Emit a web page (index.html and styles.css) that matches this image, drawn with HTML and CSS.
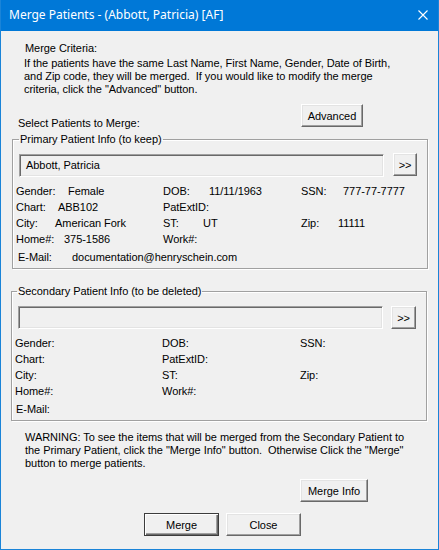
FILE: index.html
```html
<!DOCTYPE html>
<html>
<head>
<meta charset="utf-8">
<title>Merge Patients</title>
<link rel="stylesheet" href="styles.css">
</head>
<body>
<div class="window">
  <div class="titlebar">
    <span class="title">Merge Patients - (Abbott, Patricia) [AF]</span>
    <svg class="close" width="10" height="10" viewBox="0 0 10 10"><path d="M0.5 0.5 L9.5 9.5 M9.5 0.5 L0.5 9.5" stroke="#fff" stroke-width="1.1" fill="none"/></svg>
  </div>
  <div class="content">
    <div class="crit-title">Merge Criteria:</div>
    <p class="crit-text">If the patients have the same Last Name, First Name, Gender, Date of Birth,<br>and Zip code, they will be merged.&nbsp; If you would like to modify the merge<br>criteria, click the "Advanced" button.</p>

    <div class="select-row">
      <span class="select-label">Select Patients to Merge:</span>
      <button class="btn btn-advanced">Advanced</button>
    </div>

    <fieldset class="group group-primary">
      <legend>Primary Patient Info (to keep)</legend>
      <div class="pick-row">
        <div class="field field-primary">Abbott, Patricia</div>
        <button class="btn btn-pick btn-pick-primary">&gt;&gt;</button>
      </div>
      <div class="info-grid">
        <div class="cell"><span class="lbl w-gender">Gender:</span><span class="val">Female</span></div>
        <div class="cell"><span class="lbl w-dob">DOB:</span><span class="val">11/11/1963</span></div>
        <div class="cell"><span class="lbl w-ssn">SSN:</span><span class="val">777-77-7777</span></div>
        <div class="cell"><span class="lbl w-chart">Chart:</span><span class="val">ABB102</span></div>
        <div class="cell"><span class="lbl">PatExtID:</span></div>
        <div class="cell"></div>
        <div class="cell"><span class="lbl w-city">City:</span><span class="val">American Fork</span></div>
        <div class="cell"><span class="lbl w-st">ST:</span><span class="val">UT</span></div>
        <div class="cell"><span class="lbl w-zip">Zip:</span><span class="val">11111</span></div>
        <div class="cell"><span class="lbl w-home">Home#:</span><span class="val">375-1586</span></div>
        <div class="cell"><span class="lbl">Work#:</span></div>
        <div class="cell"></div>
        <div class="cell cell-email"><span class="lbl w-email">E-Mail:</span><span class="val">documentation@henryschein.com</span></div>
      </div>
    </fieldset>

    <fieldset class="group group-secondary">
      <legend>Secondary Patient Info (to be deleted)</legend>
      <div class="pick-row">
        <div class="field field-secondary"></div>
        <button class="btn btn-pick">&gt;&gt;</button>
      </div>
      <div class="info-grid">
        <div class="cell"><span class="lbl">Gender:</span></div>
        <div class="cell"><span class="lbl">DOB:</span></div>
        <div class="cell"><span class="lbl">SSN:</span></div>
        <div class="cell"><span class="lbl">Chart:</span></div>
        <div class="cell"><span class="lbl">PatExtID:</span></div>
        <div class="cell"></div>
        <div class="cell"><span class="lbl">City:</span></div>
        <div class="cell"><span class="lbl">ST:</span></div>
        <div class="cell"><span class="lbl">Zip:</span></div>
        <div class="cell"><span class="lbl">Home#:</span></div>
        <div class="cell"><span class="lbl">Work#:</span></div>
        <div class="cell"></div>
        <div class="cell cell-email cell-email-sec"><span class="lbl">E-Mail:</span></div>
      </div>
    </fieldset>

    <p class="warning">WARNING: To see the items that will be merged from the Secondary Patient to<br>the Primary Patient, click the "Merge Info" button.&nbsp; Otherwise Click the "Merge"<br>button to merge patients.</p>

    <div class="info-row">
      <button class="btn btn-info">Merge Info</button>
    </div>

    <div class="action-row">
      <button class="btn btn-action btn-default">Merge</button>
      <button class="btn btn-action">Close</button>
    </div>
  </div>
</div>
</body>
</html>
```

FILE: styles.css
```css
html, body {
  margin: 0;
  padding: 0;
  background: #f0f0f0;
}

body {
  font-family: "Liberation Sans", Arial, sans-serif;
  font-size: 11px;
  letter-spacing: -0.05px;
  color: #000;
}

.window {
  width: 439px;
  height: 550px;
  box-sizing: border-box;
  border: 1px solid #1a84d8;
  border-top: 0;
  background: #f0f0f0;
  display: flex;
  flex-direction: column;
}

.titlebar {
  height: 31px;
  flex: none;
  background: #0078d7;
  color: #fff;
  display: flex;
  align-items: flex-start;
  padding: 0 10px 0 8px;
}

.title {
  font-family: "Noto Sans", "Open Sans", sans-serif;
  font-size: 12px;
  letter-spacing: 0;
  line-height: 16px;
  margin-top: 7px;
}

.close {
  margin-left: auto;
  margin-top: 10px;
  display: block;
}

.content {
  flex: 1;
  display: flex;
  flex-direction: column;
}

.crit-title {
  margin: 11px 0 0 24px;
  line-height: 13px;
}

.crit-text {
  margin: 2px 0 0 23px;
  line-height: 13px;
}

.select-row {
  display: flex;
  height: 23px;
  margin-top: 8px;
}

.select-label {
  margin: 13px 0 0 17px;
  line-height: 13px;
  white-space: nowrap;
}

.btn {
  font-family: "Liberation Sans", Arial, sans-serif;
  font-size: 11px;
  letter-spacing: -0.05px;
  color: #000;
  background: #f0f0f0;
  box-sizing: border-box;
  height: 23px;
  padding: 0;
  margin: 0;
  border: 1px solid;
  border-color: #fff #696969 #696969 #fff;
  box-shadow: inset -1px -1px 0 #a0a0a0, inset 1px 1px 0 #e3e3e3;
  line-height: 20px;
  text-align: center;
}

.btn-advanced {
  width: 62px;
  margin-left: auto;
  margin-right: 75px;
}

.group {
  border: 1px solid #a0a0a0;
  box-shadow: inset 1px 1px 0 #fff, 1px 1px 0 #fff;
  padding: 0 0 3px 0;
  min-width: 0;
}

.group legend {
  padding: 0 1px;
  line-height: 13px;
}

.group-primary {
  margin: 6px 10px 0 11px;
}

.group-primary legend {
  margin-left: 6px;
}

.group-secondary {
  margin: 16px 11px 0 10px;
}

.group-secondary legend {
  margin-left: 5px;
}

.pick-row {
  display: flex;
  align-items: flex-start;
  margin: 7px 0 0 6px;
  height: 24px;
}

.field {
  box-sizing: border-box;
  width: 365px;
  height: 23px;
  border: 1px solid;
  border-color: #a0a0a0 #fff #fff #a0a0a0;
  box-shadow: inset 1px 1px 0 #696969, inset -1px -1px 0 #e3e3e3;
  background: #f0f0f0;
  padding-left: 6px;
  line-height: 21px;
}

.field-primary {
  margin-top: 1px;
}

.group-secondary .pick-row {
  margin-top: 8px;
  height: 23px;
}

.btn-pick {
  width: 25px;
  margin-left: 8px;
}

.btn-pick-primary {
  width: 24px;
  margin-left: 9px;
}

.info-grid {
  display: grid;
  grid-template-columns: 147px 138px 1fr;
  margin-top: 6px;
  padding-left: 3px;
}

.cell {
  height: 16px;
  line-height: 16px;
  white-space: nowrap;
  display: flex;
}

.cell-email {
  grid-column: 1 / -1;
  margin-top: 2px;
  padding-left: 2px;
}

.cell-email-sec {
  padding-left: 1px;
}

.lbl {
  display: inline-block;
  flex: none;
}

.w-gender { width: 52px; }
.w-chart { width: 42px; }
.w-city { width: 39px; }
.w-home { width: 48px; }
.w-email { width: 54px; }
.w-dob { width: 46px; }
.w-st { width: 40px; }
.w-ssn { width: 42px; }
.w-zip { width: 37px; }

.warning {
  margin: 10px 0 0 24px;
  line-height: 13px;
}

.info-row {
  display: flex;
  justify-content: flex-end;
  margin: 9px 70px 0 0;
}

.btn-info {
  width: 68px;
}

.action-row {
  display: flex;
  gap: 7px;
  margin-top: 11px;
  padding-left: 143px;
}

.btn-action {
  width: 75px;
}

.btn-default {
  border: 1px solid #3c3c3c;
  box-shadow: inset 1px 1px 0 #fff, inset -1px -1px 0 #696969, inset -2px -2px 0 #a0a0a0;
}
```
